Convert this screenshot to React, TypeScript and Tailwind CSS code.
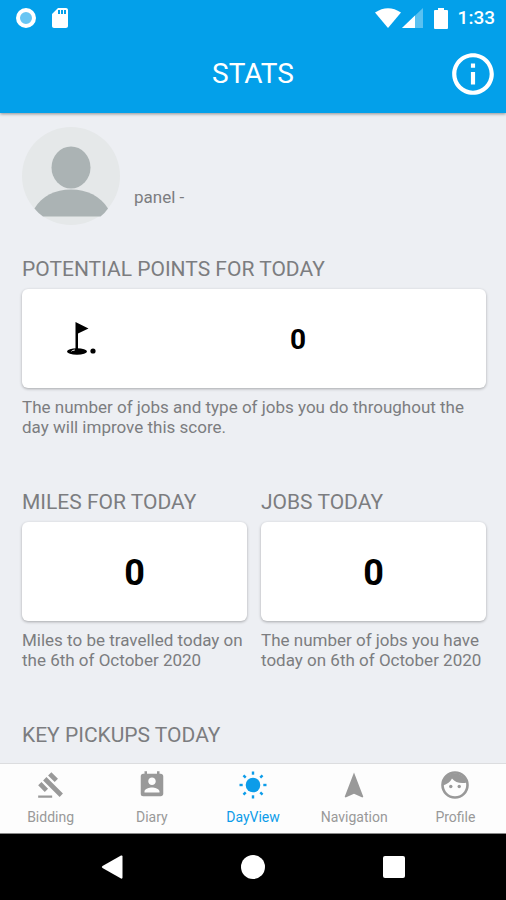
import React from 'react';
import {
  MdGavel,
  MdInfoOutline,
  MdPermContactCalendar,
  MdSdCard,
} from 'react-icons/md';
import { clsx } from 'clsx';

interface StatProps {
  title: string;
  note: string;
  children: React.ReactNode;
}

function Stat({ title, note, children }: StatProps) {
  return (
    <section>
      <h2 className="text-[21px] leading-6">{title}</h2>
      <div className="mt-2 flex h-[99px] items-center rounded-md bg-white pt-0.5 text-black shadow-[0_1px_3px_rgba(0,0,0,0.3)]">
        {children}
      </div>
      <p className="mt-[9px] text-[17px] leading-5">{note}</p>
    </section>
  );
}

function GolfIcon() {
  return (
    <svg viewBox="0 0 32 36" className="h-9 w-8" fill="currentColor">
      <path d="M9.5 0 22.500 6.500 12 11.500V29H9.500z" />
      <ellipse cx="11" cy="29.500" rx="10" ry="3.200" />
      <path d="M5.500 29.300Q6 28.300 8.800 28" fill="none" stroke="#fff" strokeWidth="1" />
      <circle cx="27" cy="29" r="2.600" />
    </svg>
  );
}

function SunIcon() {
  const rays = [0, 45, 90, 135, 180, 225, 270, 315];
  return (
    <svg viewBox="0 0 28 28" className="size-7" fill="currentColor">
      <circle cx="14" cy="14" r="7.3" />
      {rays.map((deg) => (
        <rect key={deg} x="12.8" y="0.5" width="2.4" height="3.2" transform={`rotate(${deg} 14 14)`} />
      ))}
    </svg>
  );
}

function ArrowIcon() {
  return (
    <svg viewBox="0 0 28 28" className="size-7" fill="currentColor">
      <path d="M14 1.5 23.3 25.7 22.4 26.6 14 22.7 5.6 26.6 4.7 25.7z" />
    </svg>
  );
}

function FaceIcon() {
  return (
    <svg viewBox="0 0 28 28" className="size-7" fill="currentColor">
      <circle cx="14" cy="14" r="12.5" fill="none" stroke="currentColor" strokeWidth="2.6" />
      <path d="M2 14.500Q8.500 12.500 11 7.500 16 13.500 26 11.500A12.500 12.500 0 0 0 2 11z" />
      <circle cx="9.8" cy="15.500" r="1.7" />
      <circle cx="18.2" cy="15.500" r="1.7" />
    </svg>
  );
}

const tabs = [
  { label: 'Bidding', icon: <MdGavel className="size-7" /> },
  { label: 'Diary', icon: <MdPermContactCalendar className="size-[30px]" /> },
  { label: 'DayView', icon: <SunIcon />, active: true },
  { label: 'Navigation', icon: <ArrowIcon /> },
  { label: 'Profile', icon: <FaceIcon /> },
];

function StatusBar() {
  return (
    <div className="flex h-9 items-center justify-between pl-4 pr-[11px]">
      <div className="flex items-center gap-3">
        <svg viewBox="0 0 20 20" className="size-5">
          <circle cx="10" cy="10" r="8" fill="#68c5f3" stroke="#fff" strokeWidth="4" />
        </svg>
        <MdSdCard className="size-6" />
      </div>
      <div className="flex items-center">
        <svg viewBox="0 0 26 20" className="h-5 w-[26px]" fill="currentColor">
          <path d="M0 4.5Q13-4 26 4.5L13 20z" />
        </svg>
        <svg viewBox="0 0 22 20" className="ml-px h-5 w-[22px]" fill="currentColor">
          <path d="M0 20 21 0V20z" opacity="0.35" />
          <path d="M0 20 13 7.6V20z" />
        </svg>
        <svg viewBox="0 0 14 21" className="ml-2.5 h-[21px] w-3.5" fill="currentColor">
          <path d="M4 0h6v2h3a1 1 0 0 1 1 1v17a1 1 0 0 1-1 1H1a1 1 0 0 1-1-1V3a1 1 0 0 1 1-1h3z" />
        </svg>
        <span className="ml-2.5 text-[19px] font-medium leading-5">1:33</span>
      </div>
    </div>
  );
}

export default function App() {
  return (
    <div className="flex min-h-screen flex-col bg-[#edeff3] font-['Roboto',sans-serif] text-[#7c7d80]">
      <header className="relative bg-[#03a0ea] text-white shadow-[0_1px_3px_rgba(0,0,0,0.4)]">
        <StatusBar />
        <div className="grid h-[77px] grid-cols-[1fr_auto_1fr] items-center px-2 pb-px">
          <h1 className="col-start-2 text-[28px]">STATS</h1>
          <button aria-label="Info" className="justify-self-end">
            <MdInfoOutline className="size-[50px]" />
          </button>
        </div>
      </header>

      <main className="flex-1 pl-[22px] pr-5 pt-3.5">
        <div className="flex items-end gap-3.5">
          <svg viewBox="0 0 98 98" className="size-[98px]">
            <circle cx="49" cy="49" r="49" fill="#e5e8e9" />
            <ellipse cx="49" cy="40.5" rx="19.5" ry="21" fill="#abb3b4" />
            <path d="M12.5 81.5C20 69 33 62.500 49 62.500S78 69 86 81.500Q83 86 78.500 89.500H21Q16 86 12.500 81.500z" fill="#abb3b4" />
          </svg>
          <p className="pb-[18px] text-[17px] leading-5">panel -</p>
        </div>

        <div className="mt-8 flex flex-col gap-[53px]">
          <Stat
            title="POTENTIAL POINTS FOR TODAY"
            note="The number of jobs and type of jobs you do throughout the day will improve this score."
          >
            <div className="flex w-[26%] justify-center">
              <GolfIcon />
            </div>
            <div className="w-[67%] text-center text-[28px] font-bold">0</div>
          </Stat>
          <div className="grid grid-cols-2 gap-3.5">
            <Stat title="MILES FOR TODAY" note="Miles to be travelled today on the 6th of October 2020">
              <div className="flex-1 text-center text-4xl font-bold">0</div>
            </Stat>
            <Stat title="JOBS TODAY" note="The number of jobs you have today on 6th of October 2020">
              <div className="flex-1 text-center text-4xl font-bold">0</div>
            </Stat>
          </div>
          <h2 className="text-[21px] leading-6">KEY PICKUPS TODAY</h2>
        </div>
      </main>

      <nav className="grid h-[71px] grid-cols-5 border-b border-t border-b-[#888] border-t-[#dcdddf] bg-[#fdfdfd]">
        {tabs.map((tab) => (
          <button
            key={tab.label}
            className={clsx(
              'flex flex-col items-center pt-[7px] text-sm',
              tab.active ? 'text-[#0c9ce9]' : 'text-[#999]'
            )}
          >
            <span className="flex h-7 items-center">{tab.icon}</span>
            <span className="mt-2 leading-5">{tab.label}</span>
          </button>
        ))}
      </nav>

      <div className="flex h-[66px] items-center justify-center gap-[117px] bg-black text-white">
        <button aria-label="Back">
          <svg viewBox="0 0 24 24" className="size-6" fill="currentColor">
            <path d="M21 .5Q22.5 0 22.5 1.5V22.5Q22.5 24 21 23.5L2.5 13Q1 12 2.5 11z" />
          </svg>
        </button>
        <button aria-label="Home">
          <div className="size-6 rounded-full bg-white" />
        </button>
        <button aria-label="Recents" className="flex size-6 items-center justify-center">
          <div className="size-[22px] rounded-xs bg-white" />
        </button>
      </div>
    </div>
  );
}
